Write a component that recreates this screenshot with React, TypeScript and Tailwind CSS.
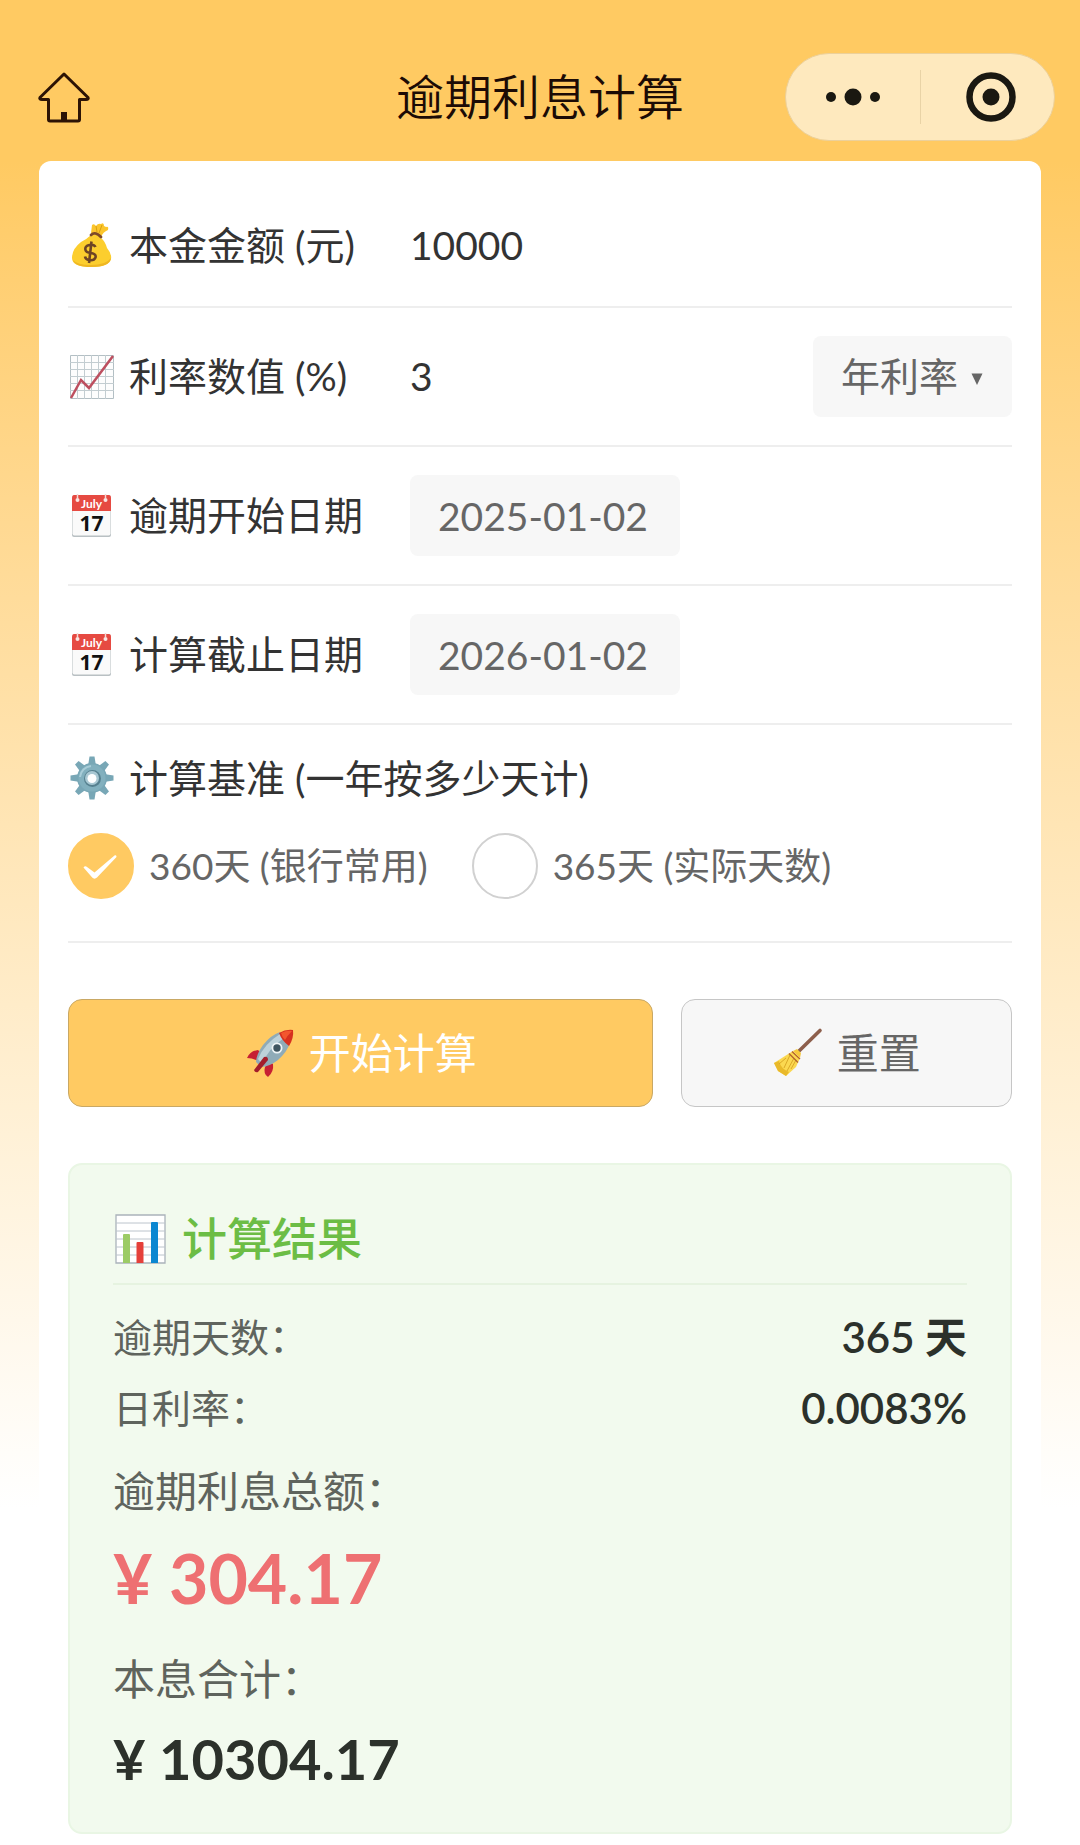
import { useState } from 'react';

const DAY_MS = 86400000;

interface Result {
  days: number;
  dailyRate: number;
  interest: number;
  total: number;
}

function calculate(
  principal: number,
  rate: number,
  unit: string,
  start: string,
  end: string,
  basis: number,
): Result {
  const days = Math.round((Date.parse(end) - Date.parse(start)) / DAY_MS);
  const perDay = { year: basis, month: basis / 12, day: 1 }[unit] ?? basis;
  const dailyRate = rate / perDay;
  const interest = (principal * dailyRate * days) / 100;
  return { days, dailyRate, interest, total: principal + interest };
}

export default function App() {
  const [principal, setPrincipal] = useState('10000');
  const [rate, setRate] = useState('3');
  const [unit, setUnit] = useState('year');
  const [start, setStart] = useState('2025-01-02');
  const [end, setEnd] = useState('2026-01-02');
  const [basis, setBasis] = useState(360);
  const [result, setResult] = useState<Result | null>(() =>
    calculate(10000, 3, 'year', '2025-01-02', '2026-01-02', 360),
  );

  const reset = () => {
    setPrincipal('');
    setRate('');
    setResult(null);
  };

  return (
    <div className="min-h-screen flex flex-col bg-[#ffca62] font-[Lato,'Noto_Sans_CJK_SC',sans-serif] text-[39px] text-[#333333]">
      <header className="grid grid-cols-[1fr_auto_1fr] items-center px-[25px] pt-[53px] pb-5">
        <button aria-label="首页" className="justify-self-start ml-3 cursor-pointer">
          <HomeIcon />
        </button>
        <h1 className="text-[48px] leading-none font-[350] text-[#1c0b05]">逾期利息计算</h1>
        <div className="justify-self-end flex items-center h-[88px] w-[270px] rounded-full bg-[#fee9be] border border-[#ecd09a]">
          <button aria-label="更多" className="w-[134px] shrink-0 flex justify-center cursor-pointer">
            <svg width="56" height="20" viewBox="0 0 56 20" fill="#1a1811">
              <circle cx="6" cy="10" r="5" />
              <circle cx="28" cy="10" r="8.5" />
              <circle cx="50" cy="10" r="5" />
            </svg>
          </button>
          <div className="w-px h-[54px] bg-[#e9d3a6]" />
          <button aria-label="关闭" className="flex-1 flex justify-center pl-1.5 cursor-pointer">
            <svg width="52" height="52" viewBox="0 0 52 52" fill="none">
              <circle cx="26" cy="26" r="21.5" stroke="#1a1811" strokeWidth="6.5" />
              <circle cx="26" cy="26" r="8.5" fill="#1a1811" />
            </svg>
          </button>
        </div>
      </header>

      <main className="flex-1 px-[39px] bg-linear-to-b from-[#ffca62] to-white to-80%">
        <div className="h-full bg-white rounded-t-[12px] px-[29px] pt-6 pb-[11px]">
          {/* Principal */}
          <div className="flex items-center h-[123px] border-b-2 border-[#eeeeee]">
            <FieldLabel id="principal" icon={<MoneyBag />} text="本金金额 (元)" />
            <input
              id="principal"
              inputMode="decimal"
              value={principal}
              onChange={(e) => setPrincipal(e.target.value)}
              className="flex-1 min-w-0 outline-none"
            />
          </div>

          {/* Rate */}
          <div className="flex items-center h-[139px] border-b-2 border-[#eeeeee]">
            <FieldLabel id="rate" icon={<TrendChart />} text="利率数值 (%)" />
            <input
              id="rate"
              inputMode="decimal"
              value={rate}
              onChange={(e) => setRate(e.target.value)}
              className="flex-1 min-w-0 outline-none"
            />
            <div className="relative">
              <select
                aria-label="利率类型"
                value={unit}
                onChange={(e) => setUnit(e.target.value)}
                className="appearance-none h-[81px] w-[199px] pl-7 rounded-lg bg-[#f7f7f7] text-[#666666] outline-none"
              >
                <option value="year">年利率</option>
                <option value="month">月利率</option>
                <option value="day">日利率</option>
              </select>
              <svg
                className="absolute right-[29px] top-[37px] pointer-events-none"
                width="12"
                height="12"
                viewBox="0 0 12 12"
              >
                <path d="M0.5 0.5H11.5L6 12Z" fill="#666666" />
              </svg>
            </div>
          </div>

          {/* Dates */}
          <DateRow id="start" text="逾期开始日期" value={start} onChange={setStart} />
          <DateRow id="end" text="计算截止日期" value={end} onChange={setEnd} />

          {/* Day count basis */}
          <fieldset className="pt-7 pb-[42px] border-b-2 border-[#eeeeee]">
            <legend className="contents">
              <span className="flex items-center gap-[13px] leading-[50px]">
                <Gear />
                计算基准 (一年按多少天计)
              </span>
            </legend>
            <div className="flex gap-11 mt-[30px] text-[37px] text-[#666666]">
              <BasisOption
                text="360天 (银行常用)"
                checked={basis === 360}
                onSelect={() => setBasis(360)}
              />
              <BasisOption
                text="365天 (实际天数)"
                checked={basis === 365}
                onSelect={() => setBasis(365)}
              />
            </div>
          </fieldset>

          {/* Actions */}
          <div className="grid grid-cols-[30fr_17fr] gap-7 mt-14 text-[42px]">
            <button
              onClick={() =>
                setResult(calculate(Number(principal), Number(rate), unit, start, end, basis))
              }
              className="flex items-center justify-center gap-[13px] h-[108px] rounded-[14px] bg-[#ffca62] border border-[#c9a864] text-white cursor-pointer"
            >
              <Rocket />
              开始计算
            </button>
            <button
              onClick={reset}
              className="flex items-center justify-center gap-[13px] h-[108px] rounded-[14px] bg-[#f7f7f7] border border-[#c6c6c6] text-[#666666] cursor-pointer"
            >
              <Broom />
              重置
            </button>
          </div>

          {/* Result */}
          {result && (
            <section className="mt-14 px-[43px] pt-[46px] pb-[35px] rounded-[14px] bg-[#f2faee] border-2 border-[#e9f6e4] text-[#5f645d]">
              <h2 className="flex items-center gap-[13px] pb-4 border-b-2 border-[#e6f3e0] text-[45px] leading-[56px] font-medium text-[#6cbd45]">
                <BarChart />
                计算结果
              </h2>
              <dl>
                <div className="flex justify-between mt-[23px] leading-[58px]">
                  <dt>逾期天数：</dt>
                  <dd className="text-[42px] font-semibold text-[#2c312b]">{result.days} 天</dd>
                </div>
                <div className="flex justify-between mt-[13px] leading-[58px]">
                  <dt>日利率：</dt>
                  <dd className="text-[42px] font-semibold text-[#2c312b]">
                    {result.dailyRate.toFixed(4)}%
                  </dd>
                </div>
                <dt className="mt-6 text-[42px] leading-[60px]">逾期利息总额：</dt>
                <dd className="mt-[13px] text-[68px] leading-[88px] font-bold text-[#ee7072]">
                  ¥ {result.interest.toFixed(2)}
                </dd>
                <dt className="mt-[27px] text-[42px] leading-[60px]">本息合计：</dt>
                <dd className="mt-3 text-[56px] leading-[76px] font-bold text-[#2c312b]">
                  ¥ {result.total.toFixed(2)}
                </dd>
              </dl>
            </section>
          )}
        </div>
      </main>
    </div>
  );
}

function FieldLabel({ id, icon, text }: { id: string; icon: React.ReactNode; text: string }) {
  return (
    <label htmlFor={id} className="flex items-center gap-[13px] w-[342px] shrink-0 whitespace-nowrap">
      {icon}
      {text}
    </label>
  );
}

function DateRow({
  id,
  text,
  value,
  onChange,
}: {
  id: string;
  text: string;
  value: string;
  onChange: (value: string) => void;
}) {
  return (
    <div className="flex items-center h-[139px] border-b-2 border-[#eeeeee]">
      <FieldLabel id={id} icon={<Calendar />} text={text} />
      <input
        id={id}
        value={value}
        onChange={(e) => onChange(e.target.value)}
        className="h-[81px] w-[270px] px-7 rounded-lg bg-[#f7f7f7] text-[#666666] outline-none"
      />
    </div>
  );
}

function BasisOption({
  text,
  checked,
  onSelect,
}: {
  text: string;
  checked: boolean;
  onSelect: () => void;
}) {
  return (
    <label className="flex items-center gap-[15px] cursor-pointer">
      <span className="relative size-[66px]">
        <input
          type="radio"
          name="basis"
          checked={checked}
          onChange={onSelect}
          className="block appearance-none size-[66px] rounded-full border-2 border-[#d1d1d1] bg-white checked:bg-[#ffca62] checked:border-[#ffca62]"
        />
        {checked && (
          <svg className="absolute inset-0 pointer-events-none" viewBox="0 0 66 66">
            <path
              d="M15.5 34.5C16.5 33 18 33 19 34L26.5 39.5L46.5 22.5C48 21.7 49 23 48.3 24.3L29 44.5C27.5 46 25.5 46 24.2 44.5Z"
              fill="#ffffff"
            />
          </svg>
        )}
      </span>
      {text}
    </label>
  );
}

function HomeIcon() {
  return (
    <svg width="54" height="52" viewBox="0 0 54 52" fill="none">
      <path
        d="M27 3L51 26.5Q52 28.5 49 28.5H42.5V48.5Q42.5 50 41 50H13Q11.500 50 11.500 48.5V28.500H5Q2 28.500 3 26.500Z"
        stroke="#2c1305"
        strokeWidth="3"
        strokeLinejoin="round"
      />
      <path d="M24 41H30V50H24Z" fill="#2c1305" />
    </svg>
  );
}

function MoneyBag() {
  return (
    <svg className="size-12 shrink-0" viewBox="0 0 48 48">
      <path
        d="M23 11L24 3Q26 1 28 4Q30 1 33 2Q36 0 36 4L38 5Q41 4 40 8Q35 10 33 15Z"
        fill="#fbc52c"
      />
      <path d="M28 4L29 10M34 3L31 11" stroke="#d9a00f" strokeWidth="1" />
      <path
        d="M23 13Q29 11 33 16Q37 19 39 26Q44 32 43 37Q41 45 23 45Q4 45 4 36Q4 27 13 20Q19 17 23 13Z"
        fill="#fcce2e"
      />
      <path d="M5 38Q9 43 23 43Q38 43 43 36Q42 45 23 45Q7 45 5 38Z" fill="#efb723" />
      <path d="M23 13Q27 9 33 15" fill="none" stroke="#7d4928" strokeWidth="2.800" strokeLinecap="round" />
      <path
        d="M27.500 25Q26 22 21.500 23Q16.500 24 17.500 28Q18 30.500 23 31Q28.500 32 27.500 35.500Q26 39 21 38Q17.500 37.500 17 34.500M23.500 19.500L21 41"
        fill="none"
        stroke="#6d4425"
        strokeWidth="2.600"
      />
    </svg>
  );
}

function TrendChart() {
  return (
    <svg className="size-12 shrink-0" viewBox="0 0 48 48" fill="none">
      <path d="M2.500 2.500H45.500V45.500H2.500Z" fill="#fdfdfd" stroke="#b3bfc4" />
      <path
        d="M9.500 2V46M16.500 2V46M23.500 2V46M30.500 2V46M37.500 2V46M2 9.500H46M2 16.500H46M2 23.500H46M2 30.500H46M2 37.500H46"
        stroke="#c3cdd1"
      />
      <path d="M3 45L13 27L21 35L45 3" stroke="#bd4f5f" strokeWidth="2.500" />
    </svg>
  );
}

function Calendar() {
  return (
    <svg className="size-12 shrink-0" viewBox="0 0 48 48">
      <rect x="4" y="4" width="39" height="41" rx="2" fill="#b9c0c3" />
      <rect x="4.500" y="4" width="38" height="39.500" rx="2" fill="#fafafa" />
      <path d="M4 6Q4 3 6 3H41Q43 3 43 6V19H4Z" fill="#e64a42" />
      <path d="M9.500 2V6M37.500 2V6" stroke="#f5d8d4" strokeWidth="1.500" />
      <circle cx="9.500" cy="8" r="2" fill="#f9e6e3" />
      <circle cx="37.500" cy="8" r="2" fill="#f9e6e3" />
      <text x="23.500" y="15.500" textAnchor="middle" className="text-[12px] font-bold" fill="#ffffff">
        July
      </text>
      <text
        x="23.500"
        y="39"
        textAnchor="middle"
        className="font-['Open_Sans'] text-[21px] font-bold"
        fill="#111111"
      >
        17
      </text>
    </svg>
  );
}

function Gear() {
  return (
    <svg className="size-12 shrink-0" viewBox="0 0 48 48">
      <g fill="#78a7b6">
        {[0, 45, 90, 135, 180, 225, 270, 315].map((deg) => (
          <path key={deg} d="M20 12L21.500 2.500H26.500L28 12Z" transform={`rotate(${deg} 24 24)`} />
        ))}
        <circle cx="24" cy="24" r="15" />
      </g>
      <circle cx="24" cy="24" r="13.500" fill="#82b0be" />
      <path d="M12 23A12 12 0 0 1 23 12" fill="none" stroke="#a8cdd8" strokeWidth="2" />
      <circle cx="24.500" cy="24.500" r="8.500" fill="#56808f" />
      <circle cx="24" cy="24" r="7" fill="#a9c8d3" />
      <circle cx="24" cy="24.500" r="4.500" fill="#ffffff" />
    </svg>
  );
}

function Rocket() {
  return (
    <svg className="size-[52px] shrink-0" viewBox="0 0 52 52">
      <path d="M14 23Q6 24 3 31Q9 31 14 34L19 28Z" fill="#c62033" />
      <path d="M29 37Q30 45 24 50Q19 47 21 40L25 34Z" fill="#c62033" />
      <path d="M12 35Q12 28 19 18Q27 8 36 5L46 16Q43 25 34 33Q25 40 17 40Z" fill="#8fabb8" />
      <path d="M14 32Q20 17 36 7L40 11Q25 21 18 37Z" fill="#bdd1d9" />
      <path d="M35 6Q42 2 49 3Q50 11 45 19Q38 14 35 6Z" fill="#d7301f" />
      <path d="M37 6Q43 3 48 4Q43 9 41 13Q38 10 37 6Z" fill="#f3562e" />
      <path d="M10 43L20 30Q24 29 24 33L14 45Q11 46 10 43Z" fill="#a31d2b" />
      <circle cx="33" cy="21" r="5.500" fill="#eef4f6" />
      <circle cx="33" cy="21" r="3.700" fill="#3f5560" />
    </svg>
  );
}

function Broom() {
  return (
    <svg className="size-[52px] shrink-0" viewBox="0 0 52 52" fill="none">
      <path d="M26 25L48 3.500" stroke="#8d5f4c" strokeWidth="3.600" strokeLinecap="round" />
      <path d="M21 24L28 31L24 40L14 49L6 44L2 36L13 29Z" fill="#fbd850" />
      <path d="M2 36L6 44L14 49L17 45Q9 42 7 34Z" fill="#e9b92a" />
      <path d="M18 28L12 41M22 31L15 44M14 31L7 37M24 33L19 42" stroke="#dba927" strokeWidth="1" />
      <path d="M17 26.500L26 35.500M20 24.500L28 32" stroke="#b5652f" strokeWidth="1.400" />
      <path d="M21 24L25 22L29 26L28 31Z" fill="#f7c93b" />
    </svg>
  );
}

function BarChart() {
  return (
    <svg className="size-14 shrink-0" viewBox="0 0 56 56">
      <path d="M3 4H52V52H3Z" fill="#ffffff" stroke="#aab3bb" strokeWidth="1.300" />
      <path d="M3 12H52M3 20H52M3 28H52M3 36H52M3 44H52" stroke="#bcc4cc" />
      <path d="M10 24Q10 23 11 23H16Q17 23 17 24V52H10Z" fill="#9ccb65" />
      <path d="M23.500 32Q23.500 31 24.500 31H29.500Q30.500 31 30.500 32V52H23.500Z" fill="#e5403a" />
      <path d="M38 12Q38 11 39 11H44Q45 11 45 12V52H38Z" fill="#0b87d1" />
    </svg>
  );
}
